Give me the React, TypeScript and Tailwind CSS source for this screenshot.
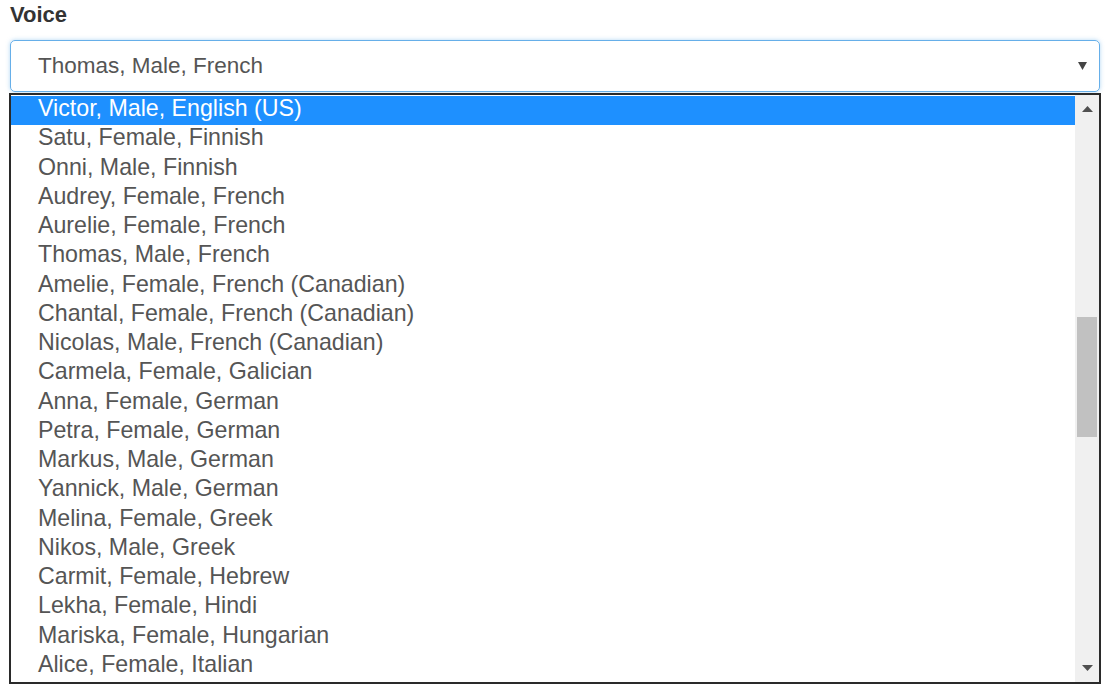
const voices = [
  "Victor, Male, English (US)",
  "Satu, Female, Finnish",
  "Onni, Male, Finnish",
  "Audrey, Female, French",
  "Aurelie, Female, French",
  "Thomas, Male, French",
  "Amelie, Female, French (Canadian)",
  "Chantal, Female, French (Canadian)",
  "Nicolas, Male, French (Canadian)",
  "Carmela, Female, Galician",
  "Anna, Female, German",
  "Petra, Female, German",
  "Markus, Male, German",
  "Yannick, Male, German",
  "Melina, Female, Greek",
  "Nikos, Male, Greek",
  "Carmit, Female, Hebrew",
  "Lekha, Female, Hindi",
  "Mariska, Female, Hungarian",
  "Alice, Female, Italian",
];

export default function App() {
  return (
    <div className="w-[1105px] h-[685px] overflow-hidden bg-white font-['Liberation_Sans',Arial,sans-serif]">
      <div className="px-[10px] pt-[2px]">
        <label className="block text-[22px] leading-[26px] font-bold text-[#333]">Voice</label>
        <div className="relative mt-[12px]">
          <div className="flex items-center h-[52px] w-[1090px] rounded-[5px] border border-[#66afe9] shadow-[0_0_4px_rgba(102,175,233,0.5)] pl-[27px] pr-[12px]">
            <span className="flex-1 text-[22.5px] text-[#555]">Thomas, Male, French</span>
            <svg width="9" height="8" viewBox="0 0 9 8"><path d="M0 0H9L4.5 8z" fill="#444" /></svg>
          </div>
          <div className="absolute left-[-1px] top-[53px] w-[1092px] h-[591px] border-2 border-[#2a2a2a] bg-white flex">
            <div className="flex-1 flex flex-col pt-px">
              {voices.map((v, i) => (
                <div
                  key={v}
                  className={
                    i === 0
                      ? "h-[29.25px] shrink-0 flex items-center pl-[27px] pb-[4px] text-[23.2px] bg-[#1e90ff] text-white"
                      : "h-[29.25px] shrink-0 flex items-center pl-[27px] pb-[4px] text-[23.2px] text-[#555]"
                  }
                >
                  {v}
                </div>
              ))}
            </div>
            <div className="w-[24px] bg-[#f0f0f0] flex flex-col items-center">
              <div className="h-[28px] flex items-center justify-center">
                <svg width="11" height="6" viewBox="0 0 11 6"><path d="M5.5 0L11 6H0z" fill="#505050" /></svg>
              </div>
              <div className="mt-[194px] w-[20px] h-[120px] bg-[#c1c1c1]" />
              <div className="flex-1" />
              <div className="h-[28px] flex items-center justify-center">
                <svg width="11" height="6" viewBox="0 0 11 6"><path d="M0 0H11L5.5 6z" fill="#505050" /></svg>
              </div>
            </div>
          </div>
        </div>
      </div>
    </div>
  );
}
